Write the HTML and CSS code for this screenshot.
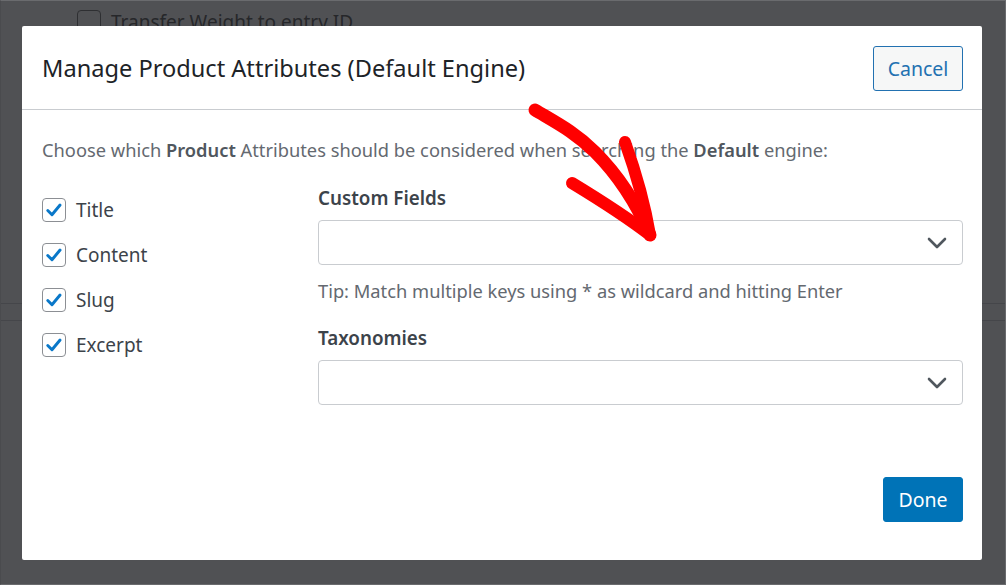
FILE: index.html
```html
<!DOCTYPE html>
<html>
<head>
<meta charset="utf-8">
<link rel="stylesheet" href="styles.css">
</head>
<body>
<div class="backdrop">
  <div class="under-row">
    <span class="under-box"></span>
    <span class="under-text">Transfer Weight to entry ID</span>
  </div>
  <div class="under-lines">
    <div class="under-line"></div>
    <div class="under-line"></div>
  </div>
</div>

<div class="modal">
  <div class="modal-header">
    <h2 class="modal-title">Manage Product Attributes (Default Engine)</h2>
    <button class="btn btn-secondary">Cancel</button>
  </div>
  <div class="modal-body">
    <p class="intro">Choose which <strong>Product</strong> Attributes should be considered when searching the <strong>Default</strong> engine:</p>
    <div class="columns">
      <div class="checks">
        <label class="check"><span class="box"><svg viewBox="0 0 24 24" width="24" height="24"><path d="M5.2 12.6 L9.8 17.2 L18.6 6.6" fill="none" stroke="#0a78c9" stroke-width="3.2" stroke-linecap="round" stroke-linejoin="round"/></svg></span>Title</label>
        <label class="check"><span class="box"><svg viewBox="0 0 24 24" width="24" height="24"><path d="M5.2 12.6 L9.8 17.2 L18.6 6.6" fill="none" stroke="#0a78c9" stroke-width="3.2" stroke-linecap="round" stroke-linejoin="round"/></svg></span>Content</label>
        <label class="check"><span class="box"><svg viewBox="0 0 24 24" width="24" height="24"><path d="M5.2 12.6 L9.8 17.2 L18.6 6.6" fill="none" stroke="#0a78c9" stroke-width="3.2" stroke-linecap="round" stroke-linejoin="round"/></svg></span>Slug</label>
        <label class="check"><span class="box"><svg viewBox="0 0 24 24" width="24" height="24"><path d="M5.2 12.6 L9.8 17.2 L18.6 6.6" fill="none" stroke="#0a78c9" stroke-width="3.2" stroke-linecap="round" stroke-linejoin="round"/></svg></span>Excerpt</label>
      </div>
      <div class="fields">
        <div class="field-label">Custom Fields</div>
        <div class="select"><svg class="chev" viewBox="0 0 20 12" width="20" height="12"><path d="M2 2 L10 10 L18 2" fill="none" stroke="#50575e" stroke-width="2.6" stroke-linecap="round" stroke-linejoin="round"/></svg></div>
        <div class="tip">Tip: Match multiple keys using * as wildcard and hitting Enter</div>
        <div class="field-label second">Taxonomies</div>
        <div class="select"><svg class="chev" viewBox="0 0 20 12" width="20" height="12"><path d="M2 2 L10 10 L18 2" fill="none" stroke="#50575e" stroke-width="2.6" stroke-linecap="round" stroke-linejoin="round"/></svg></div>
      </div>
    </div>
    <div class="footer">
      <button class="btn btn-primary">Done</button>
    </div>
  </div>
</div>

<svg class="arrow" width="1006" height="585" viewBox="0 0 1006 585">
  <path d="M535 110 C 555 122, 575 132, 595 152 C 615 172, 635 200, 650 235" fill="none" stroke="#ff0000" stroke-width="13" stroke-linecap="round" stroke-linejoin="round"/>
  <path d="M625 142 C 635 170, 645 205, 650 235" fill="none" stroke="#ff0000" stroke-width="12" stroke-linecap="round"/>
  <path d="M572 183 C 600 200, 628 218, 650 235" fill="none" stroke="#ff0000" stroke-width="12" stroke-linecap="round"/>
</svg>
</body>
</html>
```
FILE: styles.css
```css
html, body {
  margin: 0;
  padding: 0;
}
body {
  width: 1006px;
  height: 585px;
  background: #505154;
  font-family: "Noto Sans", "Open Sans", sans-serif;
  overflow: hidden;
  position: relative;
}
.backdrop {
  height: 585px;
  box-sizing: border-box;
  border: 1px solid #6a6b6e;
  border-left-color: #4a4b4e;
}
.under-row {
  display: flex;
  align-items: center;
  gap: 10px;
  padding: 9px 0 0 76px;
}
.under-box {
  width: 22px;
  height: 22px;
  border: 1px solid #2e2f32;
  border-radius: 4px;
}
.under-text {
  font-size: 19px;
  color: #26272a;
  line-height: 24px;
}
.under-lines {
  margin-top: 269px;
}
.under-line {
  height: 16px;
  border-top: 1px solid #45464a;
}
.modal {
  position: absolute;
  left: 22px;
  top: 26px;
  width: 960px;
  height: 534px;
  background: #fff;
  border-radius: 2px;
  display: flex;
  flex-direction: column;
}
.modal-header {
  height: 84px;
  box-sizing: border-box;
  border-bottom: 1px solid #c9ccd0;
  display: flex;
  align-items: center;
  justify-content: space-between;
  padding: 1px 19px 0 20px;
}
.modal-title {
  margin: 0;
  font-size: 23.6px;
  font-weight: 400;
  color: #1d2327;
}
.btn {
  font-family: inherit;
  font-size: 19.5px;
  border-radius: 3px;
  height: 45px;
  cursor: pointer;
}
.btn-secondary {
  width: 90px;
  background: #f6f7f7;
  color: #2271b1;
  border: 1px solid #2271b1;
}
.btn-primary {
  width: 80px;
  background: #0073b7;
  color: #fff;
  border: 1px solid #0073b7;
}
.modal-body {
  flex: 1;
  display: flex;
  flex-direction: column;
  padding: 0 19px 38px 20px;
}
.intro {
  margin: 27px 0 0;
  font-size: 18.3px;
  line-height: 26px;
  color: #646970;
}
.intro strong {
  color: #50575e;
  font-weight: 600;
}
.columns {
  display: flex;
  margin-top: 35px;
}
.checks {
  width: 276px;
  display: flex;
  flex-direction: column;
  gap: 21px;
}
.check {
  display: flex;
  align-items: center;
  gap: 10px;
  font-size: 19px;
  color: #3c434a;
  height: 24px;
}
.box {
  width: 22px;
  height: 22px;
  border: 1px solid #8c8f94;
  border-radius: 4px;
  display: flex;
  align-items: center;
  justify-content: center;
}
.box svg {
  width: 22px;
  height: 22px;
}
.fields {
  flex: 1;
  margin-top: -13px;
}
.field-label {
  font-size: 18.8px;
  font-weight: 600;
  color: #3c434a;
  line-height: 26px;
  margin-bottom: 9px;
}
.field-label.second {
  margin-top: 21px;
}
.select {
  height: 45px;
  box-sizing: border-box;
  border: 1px solid #c9ccd0;
  border-radius: 4px;
  display: flex;
  align-items: center;
  justify-content: flex-end;
  padding-right: 15px;
}
.tip {
  margin-top: 13px;
  font-size: 18.3px;
  line-height: 26px;
  color: #646970;
}
.footer {
  margin-top: auto;
  display: flex;
  justify-content: flex-end;
}
.arrow {
  position: absolute;
  left: 0;
  top: 0;
  pointer-events: none;
}
```
